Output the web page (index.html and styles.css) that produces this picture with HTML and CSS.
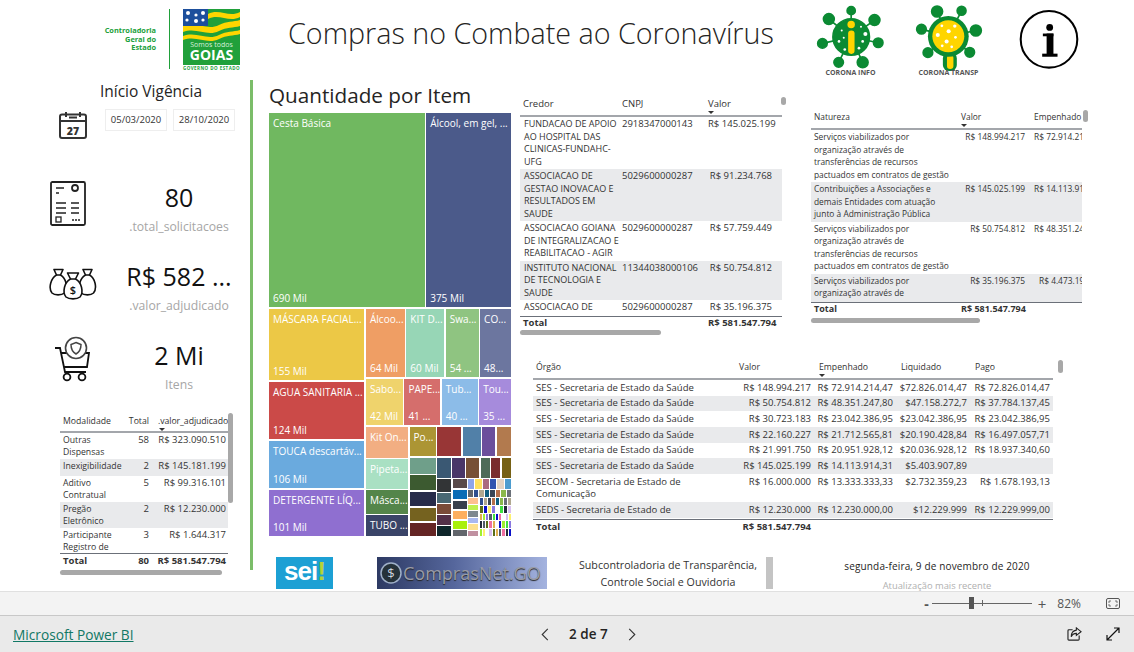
FILE: index.html
```html
<!DOCTYPE html>
<html lang="pt-BR">
<head>
  <meta charset="UTF-8">
  <title>Compras no Combate ao Coronavírus</title>
  <link rel="stylesheet" href="styles.css">
</head>
<body>

<div class="report">

  <header class="header">
    <div class="cge">Controladoria<br>Geral do<br>Estado</div>
    <div class="cge-line"></div>
    <div class="flag">
      <svg viewBox="0 0 57 56" width="57" height="56">
        <rect width="57" height="56" fill="#20a03a"/>
        <path d="M25 5 C36 -1 46 9 57 3 V8 C46 14 36 4 25 10Z" fill="#ffd500"/>
        <path d="M0 17 C14 12 24 22 36 16 C44 12 50 13 57 11 V17 C50 19 44 18 36 22 C24 28 14 18 0 23Z" fill="#ffd500"/>
        <path d="M0 27 C14 22 24 32 36 26 C44 22 50 23 57 21 V25 C50 27 44 26 36 30 C24 36 14 26 0 31Z" fill="#ffd500"/>
        <rect width="25" height="17" fill="#1d4f9c"/>
        <g fill="#fff">
          <circle cx="5" cy="4" r="2"/><circle cx="13" cy="6" r="1.6"/><circle cx="20" cy="4" r="2"/>
          <circle cx="4" cy="11" r="1.6"/><circle cx="13" cy="12" r="2"/><circle cx="20" cy="11" r="1.6"/>
        </g>
        <text x="28.5" y="38" class="flag-small">Somos todos</text>
        <text x="28.5" y="51" class="flag-big">GOIAS</text>
      </svg>
      <span class="flag-gov">GOVERNO DO ESTADO</span>
    </div>
    <h1 class="title">Compras no Combate ao Coronavírus</h1>

    <div class="corona corona-info">
      <svg viewBox="105 5 210 200" width="71" height="68">
        <g stroke="#0b8a33" stroke-width="5" fill="#0b8a33">
          <path d="M212 105V27M212 105L146 52M212 105L281 55M212 105L127 124M212 105L292 122M212 105L175 180M212 105L246 180"/>
          <circle cx="212" cy="27" r="12"/><circle cx="146" cy="52" r="16"/><circle cx="281" cy="55" r="16"/>
          <circle cx="127" cy="124" r="14"/><circle cx="292" cy="122" r="14"/><circle cx="175" cy="180" r="14"/><circle cx="246" cy="180" r="16"/>
          <circle cx="212" cy="105" r="54"/>
        </g>
        <g fill="#fff">
          <circle cx="254" cy="96" r="6"/><circle cx="176" cy="118" r="4"/><circle cx="241" cy="75" r="3"/><circle cx="184" cy="86" r="3"/>
          <circle cx="235" cy="138" r="4"/><circle cx="193" cy="142" r="4"/><circle cx="190" cy="107" r="3"/><circle cx="246" cy="118" r="4"/>
        </g>
        <circle cx="212" cy="68" r="11" fill="#ffd500"/>
        <rect x="203" y="86" width="19" height="69" rx="9" fill="#ffd500"/>
      </svg>
      <span>CORONA INFO</span>
    </div>

    <div class="corona corona-transp">
      <svg viewBox="405 5 200 200" width="68" height="68">
        <g stroke="#0b8a33" stroke-width="5" fill="#0b8a33">
          <path d="M503 103L470 30M503 103L542 28M503 103L584 86M503 103L424 82M503 103L443 151M503 103L566 150"/>
          <circle cx="470" cy="30" r="16"/><circle cx="542" cy="28" r="13"/><circle cx="584" cy="86" r="16"/>
          <circle cx="424" cy="82" r="14"/><circle cx="443" cy="151" r="14"/><circle cx="566" cy="150" r="14"/>
        </g>
        <rect x="487" y="150" width="41" height="55" rx="18" fill="#0b8a33"/>
        <rect x="499" y="158" width="19" height="41" rx="9" fill="#ffd500"/>
        <circle cx="503" cy="103" r="60" fill="#0b8a33"/>
        <circle cx="503" cy="103" r="47" fill="#ffd500"/>
        <g fill="#fff">
          <circle cx="484" cy="72" r="4"/><circle cx="522" cy="73" r="5"/><circle cx="504" cy="88" r="6"/><circle cx="472" cy="99" r="6"/>
          <circle cx="524" cy="106" r="4"/><circle cx="498" cy="118" r="6"/><circle cx="485" cy="131" r="4"/><circle cx="513" cy="134" r="4"/>
        </g>
      </svg>
      <span>CORONA TRANSP</span>
    </div>

    <svg class="info" viewBox="715 28 176 176" width="60" height="60">
      <circle cx="803" cy="117" r="83" fill="none" stroke="#000" stroke-width="6"/>
      <circle cx="805" cy="82" r="10" fill="#000"/>
      <rect x="796" y="100" width="20" height="66" fill="#000"/>
      <rect x="785" y="100" width="31" height="8" fill="#000"/>
      <rect x="783" y="159" width="45" height="9" fill="#000"/>
    </svg>
  </header>

  <aside class="sidebar">
    <div class="vig-title">Início Vigência</div>
    <div class="vig-row">
      <svg class="cal" viewBox="0 0 28 28" width="28" height="28">
        <rect x="1" y="3.5" width="26" height="23.5" rx="2" fill="none" stroke="#333" stroke-width="2"/>
        <path d="M1 10H27" stroke="#333" stroke-width="2"/>
        <path d="M7 1V6M21 1V6M10 6.5H18" stroke="#333" stroke-width="2"/>
        <text x="14" y="24" class="cal-num">27</text>
      </svg>
      <div class="date-box">05/03/2020</div>
      <div class="date-box">28/10/2020</div>
    </div>

    <div class="kpi">
      <div class="kpi-icon">
        <svg viewBox="0 0 36 45" width="36" height="45">
          <rect x="1" y="1" width="34" height="43" rx="1.5" fill="none" stroke="#222" stroke-width="1.8"/>
          <path d="M6 7H14M6 12H9M6 22H16M6 27H16M6 32H16M21 22H29M21 27H29M21 32H29" stroke="#222" stroke-width="1.6"/>
          <circle cx="25" cy="7" r="3" fill="none" stroke="#222" stroke-width="1.8"/>
          <rect x="6" y="36" width="5" height="5" fill="none" stroke="#222" stroke-width="1.3"/>
          <path d="M22 39H30" stroke="#222" stroke-width="1.6" stroke-dasharray="2 1"/>
        </svg>
      </div>
      <div class="kpi-text">
        <div class="kpi-value">80</div>
        <div class="kpi-label">.total_solicitacoes</div>
      </div>
    </div>

    <div class="kpi">
      <div class="kpi-icon icon-bags">
        <svg viewBox="0 0 48 32" width="48" height="32">
          <g fill="#fff" stroke="#111" stroke-width="1.6" stroke-linejoin="round">
            <path d="M5 1.500H14L11.500 7C17 10 19.500 20 15.500 25C12.500 27.500 5.500 27.500 3 25C-1 20 2 10 7.500 7Z"/>
            <path d="M34 1.500H43L40.500 7C46 10 48.500 20 44.500 25C42 27.500 35 27.500 32 25C28 20 31 10 36.500 7Z"/>
            <path d="M18.500 5H29.500L26.500 11C32.500 14 35 24 31 29C28 31.500 20 31.500 17 29C13 24 15.500 14 21.500 11Z"/>
          </g>
          <path d="M7.500 7H11.500M36.500 7H40.500M21.500 11H26.500" stroke="#111" stroke-width="1.600"/>
          <text x="24" y="26" class="bag-sign">$</text>
        </svg>
      </div>
      <div class="kpi-text">
        <div class="kpi-value">R$ 582 ...</div>
        <div class="kpi-label">.valor_adjudicado</div>
      </div>
    </div>

    <div class="kpi">
      <div class="kpi-icon icon-cart">
        <svg viewBox="0 0 38 46" width="38" height="46">
          <path d="M1 12H6L11 36H32" fill="none" stroke="#111" stroke-width="1.8"/>
          <path d="M7 17H13M27 17H35L33 31H10" fill="none" stroke="#111" stroke-width="1.8"/>
          <circle cx="13" cy="41" r="3.4" fill="none" stroke="#111" stroke-width="1.8"/>
          <circle cx="28" cy="41" r="3.4" fill="none" stroke="#111" stroke-width="1.8"/>
          <circle cx="22" cy="12" r="10.5" fill="#fff" stroke="#444" stroke-width="1.6"/>
          <path d="M22 6.500L27 8.500C27 13 25.500 16 22 18C18.500 16 17 13 17 8.500Z" fill="none" stroke="#444" stroke-width="1.5"/>
        </svg>
      </div>
      <div class="kpi-text">
        <div class="kpi-value">2 Mi</div>
        <div class="kpi-label">Itens</div>
      </div>
    </div>

    <div class="tbl tbl-mod">
      <div class="tbl-head row">
        <div>Modalidade</div>
        <div class="num">Total</div>
        <div class="sorted">.valor_adjudicado</div>
      </div>
      <div class="tbl-body">
        <div class="row"><div>Outras<br>Dispensas</div><div class="num">58</div><div class="num">R$ 323.090.510</div></div>
        <div class="row alt"><div>Inexigibilidade</div><div class="num">2</div><div class="num">R$ 145.181.199</div></div>
        <div class="row"><div>Aditivo<br>Contratual</div><div class="num">5</div><div class="num">R$ 99.316.101</div></div>
        <div class="row alt"><div>Pregão<br>Eletrônico</div><div class="num">2</div><div class="num">R$ 12.230.000</div></div>
        <div class="row"><div>Participante<br>Registro de</div><div class="num">3</div><div class="num">R$ 1.644.317</div></div>
      </div>
      <div class="tbl-total row"><div>Total</div><div class="num">80</div><div class="num">R$ 581.547.794</div></div>
      <div class="hscroll"></div>
      <div class="vscroll"></div>
    </div>
  </aside>

  <main class="main">
    <div class="main-top">

      <section class="tree-wrap">
        <h2 class="tree-title">Quantidade por Item</h2>
        <div class="tree">
          <div class="t-row t-big">
            <div class="cell c-cesta" style="flex:156"><span>Cesta Básica</span><span>690 Mil</span></div>
            <div class="cell c-alcool" style="flex:85"><span>Álcool, em gel, ...</span><span>375 Mil</span></div>
          </div>
          <div class="t-row t-rest">
            <div class="t-col t-left">
              <div class="cell c-masc" style="flex:71"><span>MÁSCARA FACIAL...</span><span>155 Mil</span></div>
              <div class="cell c-agua" style="flex:56"><span>AGUA SANITARIA ...</span><span>124 Mil</span></div>
              <div class="cell c-touca" style="flex:47"><span>TOUCA descartáv...</span><span>106 Mil</span></div>
              <div class="cell c-deter" style="flex:46"><span>DETERGENTE LÍQ...</span><span>101 Mil</span></div>
            </div>
            <div class="t-col t-right">
              <div class="t-row t-r1">
                <div class="cell c-alc2" style="flex:39"><span>Álcoo...</span><span>64 Mil</span></div>
                <div class="cell c-kit" style="flex:38"><span>KIT D...</span><span>60 Mil</span></div>
                <div class="cell c-swa" style="flex:33"><span>Swa...</span><span>54 ...</span></div>
                <div class="cell c-co" style="flex:31"><span>CO...</span><span>48...</span></div>
              </div>
              <div class="t-row t-r2">
                <div class="cell c-sabo" style="flex:37"><span>Sabo...</span><span>42 Mil</span></div>
                <div class="cell c-pape" style="flex:36"><span>PAPE...</span><span>41 ...</span></div>
                <div class="cell c-tub" style="flex:36"><span>Tub...</span><span>40 ...</span></div>
                <div class="cell c-tou" style="flex:32"><span>Tou...</span><span>35 ...</span></div>
              </div>
              <div class="t-row t-r3">
                <div class="t-col t-c1">
                  <div class="cell c-kiton" style="flex:31"><span>Kit On...</span></div>
                  <div class="cell c-pip" style="flex:30"><span>Pipeta...</span></div>
                  <div class="cell c-masc2" style="flex:24"><span>Másca...</span></div>
                  <div class="cell c-tubo" style="flex:21"><span>TUBO ...</span></div>
                </div>
                <div class="t-col t-c2">
                  <div class="t-row t-s1">
                    <div class="cell c-po" style="flex:28"><span>Po...</span></div>
                    <div class="cell c-r1" style="flex:25"></div>
                    <div class="cell c-b1" style="flex:19"></div>
                    <div class="cell c-p1" style="flex:14"></div>
                    <div class="cell c-br1" style="flex:15"></div>
                  </div>
                  <div class="t-row t-s2">
                    <div class="t-col t-m1">
                      <div class="cell m01" style="flex:17"></div>
                      <div class="cell m02" style="flex:16"></div>
                      <div class="cell m03" style="flex:15"></div>
                      <div class="cell m04" style="flex:14"></div>
                      <div class="cell m05" style="flex:14"></div>
                    </div>
                    <div class="t-col t-m2">
                      <div class="t-row t-m2a">
                        <div class="cell m06" style="flex:15"></div>
                        <div class="cell m07" style="flex:14"></div>
                        <div class="cell m08" style="flex:14"></div>
                        <div class="cell m09" style="flex:10"></div>
                        <div class="cell m10" style="flex:10"></div>
                        <div class="cell m11" style="flex:10"></div>
                      </div>
                      <div class="t-row t-m2b">
                        <div class="t-col t-m3">
                          <div class="cell m12" style="flex:13"></div>
                          <div class="cell m13" style="flex:10"></div>
                          <div class="cell m14" style="flex:10"></div>
                          <div class="cell m15" style="flex:10"></div>
                          <div class="cell m16" style="flex:10"></div>
                        </div>
                        <div class="t-col t-m3">
                          <div class="cell m17" style="flex:10"></div>
                          <div class="cell m18" style="flex:10"></div>
                          <div class="cell m19" style="flex:9"></div>
                          <div class="cell m20" style="flex:9"></div>
                          <div class="cell m21" style="flex:9"></div>
                          <div class="cell m22" style="flex:6"></div>
                        </div>
                        <div class="t-col t-m4">
                          <div class="t-row t-tiny1">
                            <div class="cell m23"></div><div class="cell m24"></div><div class="cell m25"></div>
                            <div class="cell m26"></div><div class="cell m27"></div><div class="cell m28"></div>
                          </div>
                          <div class="t-row t-tiny2">
                            <div class="cell m22"></div><div class="cell m29"></div><div class="cell m30"></div><div class="cell m31"></div>
                            <div class="cell m32"></div><div class="cell m33"></div><div class="cell m34"></div><div class="cell m35"></div>
                          </div>
                          <div class="t-row t-tiny3">
                            <div class="t-col t-m5">
                              <div class="cell m36"></div><div class="cell m37"></div><div class="cell m38"></div>
                              <div class="cell m39"></div><div class="cell m40"></div><div class="cell m41"></div>
                            </div>
                            <div class="t-col t-m6">
                              <div class="t-row"><div class="cell m29"></div><div class="cell m30"></div><div class="cell m32"></div><div class="cell m33"></div><div class="cell m31"></div><div class="cell m34"></div><div class="cell m35"></div><div class="cell m30"></div></div>
                              <div class="t-row"><div class="cell m42"></div><div class="cell m43"></div><div class="cell m44"></div><div class="cell m45"></div><div class="cell m46"></div><div class="cell m47"></div><div class="cell m48"></div><div class="cell m49"></div></div>
                              <div class="t-row"><div class="cell m50"></div><div class="cell m51"></div><div class="cell m45"></div><div class="cell m52"></div><div class="cell m47"></div><div class="cell m43"></div><div class="cell m53"></div><div class="cell m46"></div><div class="cell m49"></div><div class="cell m44"></div></div>
                              <div class="t-row"><div class="cell m48"></div><div class="cell m52"></div><div class="cell m42"></div><div class="cell m53"></div><div class="cell m50"></div><div class="cell m46"></div><div class="cell m43"></div><div class="cell m51"></div><div class="cell m47"></div><div class="cell m45"></div></div>
                              <div class="t-row"><div class="cell m51"></div><div class="cell m44"></div><div class="cell m46"></div><div class="cell m49"></div><div class="cell m42"></div><div class="cell m50"></div><div class="cell m52"></div><div class="cell m53"></div><div class="cell m48"></div><div class="cell m43"></div></div>
                            </div>
                          </div>
                        </div>
                      </div>
                    </div>
                  </div>
                </div>
              </div>
            </div>
          </div>
        </div>
      </section>

      <section class="tables">
        <div class="tables-top">
          <div class="tbl tbl-credor">
            <div class="tbl-head row">
              <div>Credor</div><div>CNPJ</div><div class="sorted">Valor</div>
            </div>
            <div class="tbl-body">
              <div class="row"><div>FUNDACAO DE APOIO<br>AO HOSPITAL DAS<br>CLINICAS-FUNDAHC-<br>UFG</div><div>2918347000143</div><div class="num">R$ 145.025.199</div></div>
              <div class="row alt"><div>ASSOCIACAO DE<br>GESTAO INOVACAO E<br>RESULTADOS EM<br>SAUDE</div><div>5029600000287</div><div class="num">R$ 91.234.768</div></div>
              <div class="row"><div>ASSOCIACAO GOIANA<br>DE INTEGRALIZACAO E<br>REABILITACAO - AGIR</div><div>5029600000287</div><div class="num">R$ 57.759.449</div></div>
              <div class="row alt"><div>INSTITUTO NACIONAL<br>DE TECNOLOGIA E<br>SAUDE</div><div>11344038000106</div><div class="num">R$ 50.754.812</div></div>
              <div class="row"><div>ASSOCIACAO DE<br>GESTAO INOVACAO E</div><div>5029600000287</div><div class="num">R$ 35.196.375</div></div>
            </div>
            <div class="tbl-total row"><div>Total</div><div></div><div class="num">R$ 581.547.794</div></div>
            <div class="hscroll"></div>
            <div class="vscroll"></div>
          </div>

          <div class="tbl tbl-natureza">
            <div class="tbl-head row">
              <div>Natureza</div><div class="sorted">Valor</div><div>Empenhado</div>
            </div>
            <div class="tbl-body">
              <div class="row"><div>Serviços viabilizados por<br>organização através de<br>transferências de recursos<br>pactuados em contratos de gestão</div><div class="num">R$ 148.994.217</div><div class="clip">R$ 72.914.214,47</div></div>
              <div class="row alt"><div>Contribuições a Associações e<br>demais Entidades com atuação<br>junto à Administração Pública</div><div class="num">R$ 145.025.199</div><div class="clip">R$ 14.113.914,31</div></div>
              <div class="row"><div>Serviços viabilizados por<br>organização através de<br>transferências de recursos<br>pactuados em contratos de gestão</div><div class="num">R$ 50.754.812</div><div class="clip">R$ 48.351.247,80</div></div>
              <div class="row alt"><div>Serviços viabilizados por<br>organização através de<br>transferências de recursos</div><div class="num">R$ 35.196.375</div><div class="clip clip-short">R$ 4.473.192,00</div></div>
            </div>
            <div class="tbl-total row"><div>Total</div><div class="num">R$ 581.547.794</div><div></div></div>
            <div class="hscroll"></div>
            <div class="vscroll"></div>
          </div>
        </div>

        <div class="tbl tbl-orgao">
          <div class="tbl-head row">
            <div>Órgão</div><div>Valor</div><div class="sorted">Empenhado</div><div>Liquidado</div><div>Pago</div>
          </div>
          <div class="tbl-body">
            <div class="row"><div>SES - Secretaria de Estado da Saúde</div><div class="num">R$ 148.994.217</div><div class="num">R$ 72.914.214,47</div><div class="num">$72.826.014,47</div><div class="num">R$ 72.826.014,47</div></div>
            <div class="row alt"><div>SES - Secretaria de Estado da Saúde</div><div class="num">R$ 50.754.812</div><div class="num">R$ 48.351.247,80</div><div class="num">$47.158.272,7</div><div class="num">R$ 37.784.137,45</div></div>
            <div class="row"><div>SES - Secretaria de Estado da Saúde</div><div class="num">R$ 30.723.183</div><div class="num">R$ 23.042.386,95</div><div class="num">$23.042.386,95</div><div class="num">R$ 23.042.386,95</div></div>
            <div class="row alt"><div>SES - Secretaria de Estado da Saúde</div><div class="num">R$ 22.160.227</div><div class="num">R$ 21.712.565,81</div><div class="num">$20.190.428,84</div><div class="num">R$ 16.497.057,71</div></div>
            <div class="row"><div>SES - Secretaria de Estado da Saúde</div><div class="num">R$ 21.991.750</div><div class="num">R$ 20.951.928,12</div><div class="num">$20.036.928,12</div><div class="num">R$ 18.937.340,60</div></div>
            <div class="row alt"><div>SES - Secretaria de Estado da Saúde</div><div class="num">R$ 145.025.199</div><div class="num">R$ 14.113.914,31</div><div class="num">$5.403.907,89</div><div class="num"></div></div>
            <div class="row"><div>SECOM - Secretaria de Estado de<br>Comunicação</div><div class="num">R$ 16.000.000</div><div class="num">R$ 13.333.333,33</div><div class="num">$2.732.359,23</div><div class="num">R$ 1.678.193,13</div></div>
            <div class="row alt"><div>SEDS - Secretaria de Estado de</div><div class="num">R$ 12.230.000</div><div class="num">R$ 12.230.000,00</div><div class="num">$12.229.999</div><div class="num">R$ 12.229.999,00</div></div>
          </div>
          <div class="tbl-total row"><div>Total</div><div class="num">R$ 581.547.794</div><div></div><div></div><div></div></div>
          <div class="vscroll"></div>
        </div>
      </section>
    </div>

    <div class="links">
      <div class="sei">sei<b>!</b></div>
      <div class="comprasnet">
        <svg viewBox="0 0 24 24" width="24" height="24">
          <circle cx="12" cy="12" r="10" fill="#26323a" stroke="#9fb0c8" stroke-width="1.5"/>
          <text x="12" y="17" class="coin">$</text>
        </svg>
        <span>ComprasNet.GO</span>
      </div>
      <div class="subcontrol">Subcontroladoria de Transparência,<br>Controle Social e Ouvidoria</div>
      <div class="sub-scroll"></div>
      <div class="updated">
        <div class="updated-date">segunda-feira, 9 de novembro de 2020</div>
        <div class="updated-label">Atualização mais recente</div>
      </div>
    </div>
  </main>
</div>

<div class="zoombar">
  <span class="z-btn">-</span>
  <div class="z-track"><i class="z-thumb"></i><i class="z-tick"></i></div>
  <span class="z-btn z-plus">+</span>
  <span class="z-pct">82%</span>
  <svg class="z-fit" viewBox="0 0 14 11" width="14" height="11">
    <rect x="0.5" y="0.5" width="13" height="10" rx="1.5" fill="none" stroke="#555"/>
    <path d="M5 3H3V5M9 3H11V5M5 8H3V6M9 8H11V6" fill="none" stroke="#555" stroke-width="0.8"/>
  </svg>
</div>

<footer class="footer">
  <a class="pbi-link" href="#">Microsoft Power BI</a>
  <div class="pager">
    <svg viewBox="0 0 8 14" width="8" height="13"><path d="M7 1L1 7L7 13" fill="none" stroke="#333" stroke-width="1.2"/></svg>
    <span>2 de 7</span>
    <svg viewBox="0 0 8 14" width="8" height="13"><path d="M1 1L7 7L1 13" fill="none" stroke="#333" stroke-width="1.2"/></svg>
  </div>
  <div class="foot-icons">
    <svg viewBox="0 0 16 15" width="15" height="14">
      <path d="M6 3H2C1.400 3 1 3.400 1 4V13C1 13.600 1.400 14 2 14H12C12.600 14 13 13.600 13 13V9" fill="none" stroke="#222" stroke-width="1.2"/>
      <path d="M10 1L15 5L10 9V6.800C7.500 6.800 5.500 8 4.500 10.500C4.500 7 6.500 3.800 10 3.300Z" fill="none" stroke="#222" stroke-width="1.200"/>
    </svg>
    <svg viewBox="0 0 14 14" width="14" height="14">
      <path d="M1 13L13 1M8 1H13V6M1 8V13H6" fill="none" stroke="#111" stroke-width="1.200"/>
    </svg>
  </div>
</footer>

</body>
</html>
```

FILE: styles.css
```css
* {
  box-sizing: border-box;
}

html, body {
  margin: 0;
  height: 100%;
}

body {
  display: flex;
  flex-direction: column;
  height: 652px;
  overflow: hidden;
  background: #fff;
  font-family: "Open Sans", "Noto Sans", sans-serif;
  color: #333;
}

/* canvas */
.report {
  display: grid;
  grid-template-columns: 253px 1fr;
  grid-template-rows: 80px 1fr;
  height: 591px;
  overflow: hidden;
}

.header {
  grid-column: 1 / 3;
  display: flex;
  align-items: flex-start;
}

.cge {
  width: 156px;
  margin-top: 26px;
  text-align: right;
  font-size: 7.400px;
  font-weight: 700;
  line-height: 8.500px;
  color: #20a03a;
  white-space: nowrap;
}

.cge-line {
  width: 1px;
  height: 60px;
  margin: 9px 0 0 13px;
  background: #20a03a;
}

.flag {
  width: 57px;
  margin: 9px 0 0 13px;
}

.flag svg {
  display: block;
}

.flag-small {
  font-size: 7px;
  fill: #d8efdc;
  text-anchor: middle;
}

.flag-big {
  font-size: 14px;
  font-weight: 700;
  fill: #fff;
  text-anchor: middle;
}

.flag-gov {
  display: block;
  font-size: 4.500px;
  font-weight: 700;
  letter-spacing: 0.45px;
  line-height: 6px;
  white-space: nowrap;
  color: #20a03a;
}

.title {
  margin: 14px 0 0 48px;
  width: 527px;
  font-size: 28.700px;
  font-weight: 300;
  line-height: 38px;
  color: #252423;
  white-space: nowrap;
}

.corona {
  display: flex;
  flex-direction: column;
  align-items: center;
  width: 71px;
  margin-top: 3px;
}

.corona svg {
  display: block;
}

.corona span {
  margin-top: -3px;
  font-size: 7px;
  font-weight: 700;
  line-height: 9px;
  white-space: nowrap;
  color: #555;
}

.corona-transp {
  margin-left: 27px;
}

.info {
  margin: 9px 0 0 35px;
}

/* left column */
.sidebar {
  height: 490px;
  border-right: 3px solid #7bbd69;
}

.vig-title {
  padding-left: 52px;
  width: 250px;
  text-align: center;
  font-size: 15.500px;
  line-height: 22px;
  color: #252423;
}

.vig-row {
  display: flex;
  align-items: flex-start;
  padding: 7px 0 0 59px;
}

.cal {
  margin: 2px 18px 0 0;
}

.cal-num {
  font-size: 10.500px;
  font-weight: 800;
  fill: #333;
  text-anchor: middle;
}

.bag-sign {
  font-size: 11px;
  font-weight: 600;
  fill: #111;
  text-anchor: middle;
}

.date-box {
  height: 22px;
  width: 62px;
  margin-right: 6px;
  border: 1px solid #eee;
  text-align: center;
  font-size: 9.500px;
  line-height: 20px;
  color: #333;
}

.kpi {
  display: flex;
  height: 79px;
  padding-left: 50px;
}

.vig-row + .kpi {
  margin-top: 42px;
}

.kpi-icon {
  flex: none;
  width: 64px;
}

.icon-bags {
  margin-top: 8px;
  margin-left: -1px;
  width: 65px;
}

.icon-cart {
  margin-top: -3px;
  margin-left: 4px;
  width: 60px;
}

.kpi-text {
  width: 130px;
  text-align: center;
}

.kpi-value {
  font-size: 25px;
  line-height: 32px;
  color: #111;
}

.kpi-label {
  margin-top: 6px;
  font-size: 12.200px;
  line-height: 16px;
  color: #a6a6a6;
}

/* tables */
.tbl {
  position: relative;
  font-size: 9.500px;
  line-height: 12.500px;
  color: #333;
}

.row {
  display: grid;
}

.row > div {
  padding: 1px 3px;
  white-space: nowrap;
  min-width: 0;
}

.num {
  text-align: right;
}

.alt {
  background: #e9eaec;
}

.tbl-head {
  border-bottom: 2px solid #a3a6ab;
}

.tbl-head > div {
  padding-top: 3px;
}

.sorted {
  position: relative;
}

.sorted::after {
  content: "";
  position: absolute;
  left: 3px;
  top: 16px;
  border: 3px solid transparent;
  border-top: 3px solid #333;
  border-bottom: 0;
}

.tbl-body {
  overflow: hidden;
}

.tbl-total {
  border-top: 1.500px solid #6b7079;
  font-weight: 700;
}

.tbl-total > div {
  padding-top: 0;
  padding-bottom: 0;
}

.hscroll {
  height: 5px;
  border-radius: 3px;
  background: #a8a8a8;
}

.vscroll {
  position: absolute;
  width: 5px;
  border-radius: 3px;
  background: #a8a8a8;
}

.tbl-mod {
  width: 168px;
  margin: -6px 0 0 60px;
}

.tbl-mod .row {
  grid-template-columns: 62px 29px 77px;
}

.tbl-mod .row > div {
  padding: 0.500px 2px 0.500px 3px;
}

.tbl-mod .tbl-body .row > div:first-child {
  font-size: 8.700px;
}

.tbl-mod .tbl-head {
  height: 21px;
  font-size: 8.700px;
}

.tbl-mod .tbl-head > div {
  padding-top: 3px;
}

.tbl-mod .tbl-head .sorted {
  padding-left: 7px;
  letter-spacing: -0.05px;
}

.tbl-mod .sorted::after {
  left: 8px;
}

.tbl-mod .tbl-body {
  height: 120px;
}

.tbl-mod .tbl-body > .row {
  min-height: 17px;
}

.tbl-mod .hscroll {
  width: 162px;
  margin-top: 2px;
}

.tbl-mod .vscroll {
  top: 1px;
  left: 168px;
  height: 90px;
}

.tbl-credor {
  width: 262px;
  height: 241px;
  flex: none;
}

.tbl-credor .row {
  grid-template-columns: 99px 86px 77px;
}

.tbl-credor .tbl-body .row > div:first-child {
  font-size: 9px;
  padding-left: 4px;
}

.tbl-credor .num {
  padding-right: 10px;
}

.tbl-credor .tbl-head {
  height: 22px;
}

.tbl-credor .tbl-body {
  height: 199px;
}

.tbl-credor .hscroll {
  width: 141px;
}

.tbl-credor .vscroll {
  top: 2px;
  left: 261px;
  height: 8px;
}

.tbl-natureza {
  width: 271px;
  height: 220px;
  margin: 13px 0 0 29px;
  flex: none;
  font-size: 8.400px;
}

.tbl-natureza .row {
  grid-template-columns: 147px 73px 51px;
}

.tbl-natureza .num {
  padding-right: 6px;
}

.tbl-natureza .tbl-total {
  font-size: 9px;
}

.tbl-natureza .tbl-head {
  height: 22px;
}

.tbl-natureza .tbl-body {
  height: 172px;
}

.tbl-natureza .clip {
  overflow: hidden;
}

.tbl-natureza .clip-short {
  padding-left: 8px;
}

.tbl-natureza .hscroll {
  width: 169px;
  margin-top: 2px;
}

.tbl-natureza .vscroll {
  top: 2px;
  left: 272px;
  height: 12px;
}

.tbl-orgao {
  width: 520px;
  margin-left: 13px;
}

.tbl-orgao .row {
  grid-template-columns: 203px 78px 82px 74px 83px;
}

.tbl-orgao .tbl-head {
  height: 22px;
  font-size: 8.700px;
}

.tbl-orgao .tbl-head > div:nth-child(n+3) {
  padding-left: 5px;
}

.tbl-orgao .sorted::after {
  left: 5px;
}

.tbl-orgao .tbl-body {
  height: 139px;
}

.tbl-orgao .tbl-body .row > div {
  padding-top: 1.600px;
  padding-bottom: 1.600px;
}

.tbl-orgao .tbl-total > div {
  padding-top: 1px;
}

.tbl-orgao .vscroll {
  top: 2px;
  left: 525px;
  height: 13px;
}

/* center */
.main {
  padding-left: 16px;
  min-width: 0;
}

.main-top {
  display: flex;
  height: 475px;
}

.tree-wrap {
  width: 242px;
  flex: none;
}

.tree-title {
  margin: 0;
  height: 33px;
  font-size: 20.700px;
  font-weight: 400;
  line-height: 31px;
  color: #252423;
  white-space: nowrap;
}

.tree {
  display: flex;
  flex-direction: column;
  gap: 2px;
  height: 423px;
}

.t-row {
  display: flex;
  gap: 1.500px;
  flex: 1;
  min-width: 0;
  min-height: 0;
}

.t-col {
  display: flex;
  flex-direction: column;
  gap: 1.500px;
  min-width: 0;
  min-height: 0;
}

.t-big { flex: none; height: 194px; }
.t-rest { gap: 2px; }
.t-left { width: 95px; flex: none; gap: 2px; }
.t-right { flex: 1; gap: 2px; }
.t-r1 { flex: none; height: 68px; }
.t-r2 { flex: none; height: 46px; }
.t-c1 { width: 42px; flex: none; }
.t-c2 { flex: 1; }
.t-s1 { flex: none; height: 29px; }
.t-m1 { width: 26px; flex: none; }
.t-m2 { flex: 1; }
.t-m2a { flex: none; height: 20px; }
.t-m3 { width: 14px; flex: none; }
.t-m4 { flex: 1; gap: 1px; }
.t-tiny1 { flex: none; height: 10px; gap: 1px; }
.t-tiny2 { flex: none; height: 7px; gap: 1px; }
.t-m5 { width: 10px; flex: none; gap: 1px; }
.t-m6 { flex: 1; gap: 1px; }
.t-m6 .t-row { gap: 1px; }

.cell {
  flex: 1;
  display: flex;
  flex-direction: column;
  justify-content: space-between;
  min-width: 0;
  min-height: 0;
  overflow: hidden;
  font-size: 10px;
  line-height: 13px;
  color: #fff;
  white-space: nowrap;
}

.cell span {
  padding: 4px 4px 0;
}

.cell span + span {
  padding: 0 4px 2px;
}

.c-cesta { background: #70b860; }
.c-alcool { background: #4b5a8a; }
.c-masc { background: #ecc846; }
.c-agua { background: #cb4a48; }
.c-touca { background: #6aaade; }
.c-deter { background: #8f6fd0; }
.c-alc2 { background: #ef9e64; }
.c-kit { background: #97d6b6; }
.c-swa { background: #8fc481; }
.c-co { background: #6c769f; }
.c-sabo { background: #efd36c; }
.c-pape { background: #d56e6c; }
.c-tub { background: #8cbce8; }
.c-tou { background: #a68bdc; }
.c-kiton { background: #f2ae82; }
.c-pip { background: #a9e0c3; }
.c-masc2 { background: #54854a; }
.c-tubo { background: #3a4468; }
.c-po { background: #ac9534; }
.c-r1 { background: #983636; }
.c-b1 { background: #5180a8; }
.c-p1 { background: #6b4f9c; }
.c-br1 { background: #b27a4e; }

.m01 { background: #6f9f8a; }
.m02 { background: #3c5a30; }
.m03 { background: #272c4a; }
.m04 { background: #75621f; }
.m05 { background: #642524; }
.m06 { background: #3a5873; }
.m07 { background: #493668; }
.m08 { background: #775035; }
.m09 { background: #4e6b58; }
.m10 { background: #7a2c2e; }
.m11 { background: #766115; }
.m12 { background: #323436; }
.m13 { background: #496873; }
.m14 { background: #7a4b38; }
.m15 { background: #533048; }
.m16 { background: #0e262a; }
.m17 { background: #594a4a; }
.m18 { background: #0b6cb5; }
.m19 { background: #38404c; }
.m20 { background: #fdae5f; }
.m21 { background: #a9f00c; }
.m22 { background: #62666c; }
.m23 { background: #8da5ea; }
.m24 { background: #fde05f; }
.m25 { background: #aa6a80; }
.m26 { background: #3054b0; }
.m27 { background: #e2d3c3; }
.m28 { background: #4c9ccf; }
.m29 { background: #2f4f8f; }
.m30 { background: #b0a890; }
.m31 { background: #0f5f80; }
.m32 { background: #3a4656; }
.m33 { background: #b5704a; }
.m34 { background: #8ab84c; }
.m35 { background: #6a7078; }
.m36 { background: #fdc08f; }
.m37 { background: #bef050; }
.m38 { background: #7e8890; }
.m39 { background: #a9b8f0; }
.m40 { background: #fde08f; }
.m41 { background: #c090a0; }
.m42 { background: #5a6d18; }
.m43 { background: #0a10c8; }
.m44 { background: #fdf070; }
.m45 { background: #8a78e0; }
.m46 { background: #ffffff; }
.m47 { background: #40e040; }
.m48 { background: #222a38; }
.m49 { background: #d8c0f0; }
.m50 { background: #e0b050; }
.m51 { background: #a0f030; }
.m52 { background: #505a68; }
.m53 { background: #f070a0; }

.tables {
  margin-left: 9px;
  min-width: 0;
  flex: 1;
}

.tables-top {
  display: flex;
  height: 263px;
  margin-top: 15px;
}

/* bottom strip */
.links {
  display: flex;
  align-items: flex-start;
  height: 36px;
  padding: 2px 0 0 7px;
}

.sei {
  width: 57px;
  height: 32px;
  background: #1ca0d4;
  text-align: center;
  font-family: "Liberation Sans", sans-serif;
  font-size: 26px;
  font-weight: 700;
  line-height: 28px;
  letter-spacing: -1px;
  color: #fff;
}

.sei b {
  color: #b5d334;
}

.comprasnet {
  display: flex;
  align-items: center;
  gap: 0;
  width: 170px;
  height: 32px;
  margin-left: 44px;
  padding-left: 2px;
  background: linear-gradient(90deg, #2d3a63, #55669c 45%, #a4b3df);
  font-size: 18px;
  white-space: nowrap;
  color: #9a9ca6;
  text-shadow: 0 1px 1px #222;
}

.coin {
  font-size: 13px;
  fill: #cdd6e0;
  text-anchor: middle;
}

.subcontrol {
  width: 188px;
  margin: 0 0 0 27px;
  text-align: center;
  font-size: 10.700px;
  line-height: 17px;
  color: #333;
  white-space: nowrap;
}

.sub-scroll {
  width: 7px;
  height: 32px;
  margin-left: 4px;
  background: #c4c4c4;
}

.updated {
  width: 186px;
  margin: 2px 0 0 71px;
  text-align: center;
  white-space: nowrap;
}

.updated-date {
  font-size: 10px;
  line-height: 14px;
  letter-spacing: 0.15px;
  color: #252423;
}

.updated-label {
  margin-top: 7px;
  font-size: 9.400px;
  line-height: 12px;
  color: #b0b0b0;
}

/* zoom bar */
.zoombar {
  display: flex;
  align-items: center;
  justify-content: flex-end;
  height: 25px;
  padding-right: 14px;
  background: #f3f3f3;
  border-top: 1px solid #e0e0e0;
  border-bottom: 1px solid #c8c8c8;
  color: #555;
}

.z-btn {
  font-size: 14px;
  font-weight: 700;
  line-height: 14px;
}

.z-track {
  position: relative;
  width: 100px;
  height: 1px;
  margin: 0 6px 0 3px;
  background: #666;
}

.z-thumb {
  position: absolute;
  left: 37px;
  top: -6px;
  width: 5px;
  height: 12px;
  background: #555;
}

.z-tick {
  position: absolute;
  left: 50px;
  top: -3px;
  width: 1px;
  height: 6px;
  background: #666;
}

.z-plus {
  font-weight: 400;
  font-size: 15px;
}

.z-pct {
  margin: 0 25px 0 11px;
  font-size: 12px;
}

/* report footer */
.footer {
  position: relative;
  flex: 1;
  display: flex;
  align-items: center;
  justify-content: space-between;
  padding: 0 14px 0 13px;
  background: #eaeaea;
}

.pbi-link {
  font-size: 13.700px;
  color: #117865;
}

.pager {
  position: absolute;
  left: 541px;
  display: flex;
  align-items: center;
  gap: 20px;
  font-size: 13.500px;
  font-weight: 600;
  color: #252423;
}

.foot-icons {
  display: flex;
  align-items: center;
  gap: 24px;
}
```
